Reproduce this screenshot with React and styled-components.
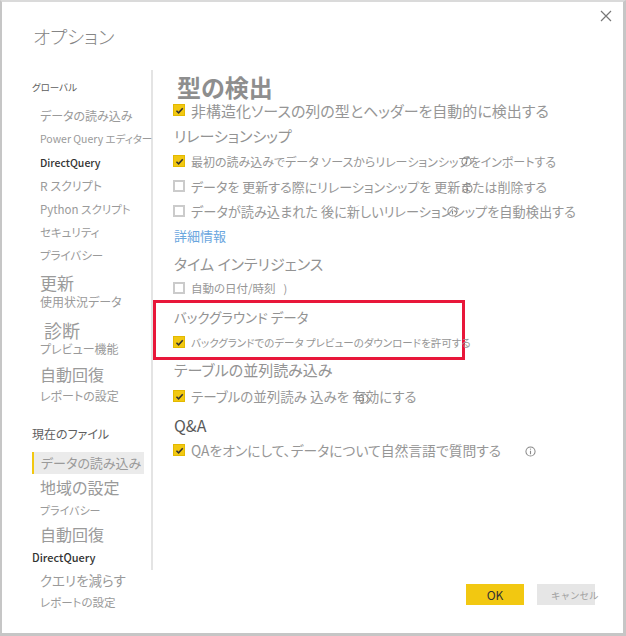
import React from 'react';
import styled, {createGlobalStyle} from 'styled-components';

const Global = createGlobalStyle`
  html, body {
    margin: 0;
    padding: 0;
    background: #fff;
  }
  body {
    font-family: "Noto Sans CJK JP", "Noto Sans", sans-serif;
    font-feature-settings: "palt" 1;
  }
`;

const Dialog = styled.div`
  box-sizing: border-box;
  width: 626px;
  height: 636px;
  display: flex;
  flex-direction: column;
  background: #fff;
  border-style: solid;
  border-color: #c6c6c6;
  border-width: 2px 3px 3px 2px;
  border-top-color: #dadada;
`;

const Header = styled.div`
  height: 68px;
  display: flex;
  justify-content: space-between;
  align-items: flex-start;
  padding-left: 31px;
  padding-right: 9px;
`;

const Title = styled.h1`
  margin: 22px 0 0;
  font-size: 18.5px;
  line-height: 24px;
  font-weight: 300;
  color: #858585;
`;

const Close = styled.button`
  margin-top: 6px;
  width: 16px;
  height: 16px;
  padding: 0;
  border: 0;
  background: none;
  display: flex;
  align-items: center;
  justify-content: center;
`;

const Body = styled.div`
  height: 500px;
  display: flex;
`;

const Nav = styled.nav`
  box-sizing: border-box;
  width: 151px;
  flex: none;
  border-right: 2px solid #e4e4e4;
  padding-left: 29px;
`;

const NavItem = styled.div`
  height: 18px;
  line-height: 18px;
  margin-top: ${p => p.$mt}px;
  padding-left: ${p => (p.$head ? 1 : 9)}px;
  font-size: ${p => p.$size}px;
  font-weight: ${p => (p.$strong ? 500 : 400)};
  color: ${p => (p.$strong ? '#333' : p.$head ? '#5e5e5e' : '#9a9a9a')};
  white-space: nowrap;
`;

const NavSelected = styled.div`
  box-sizing: border-box;
  width: 112px;
  height: 22px;
  line-height: 22px;
  margin: 9px 0 0 1px;
  padding-left: 7px;
  border-left: 2px solid #f2c811;
  background: #ebebeb;
  font-size: 13px;
  color: #9a9a9a;
  white-space: nowrap;
`;

const Content = styled.section`
  flex: 1;
  padding-left: 20px;
  color: #969696;
`;

const PageTitle = styled.h2`
  margin: 5px 0 0;
  height: 24px;
  line-height: 24px;
  padding-left: 4px;
  font-size: 24px;
  font-weight: 700;
  color: #8e8e8e;
`;

const Heading = styled.h3`
  margin: ${p => p.$mt}px 0 0;
  height: 20px;
  line-height: 20px;
  padding-left: 1px;
  font-size: ${p => p.$size}px;
  font-weight: 400;
  color: ${p => (p.$dark ? '#5a5a5a' : '#939393')};
  white-space: nowrap;
`;

const Row = styled.label`
  position: relative;
  display: flex;
  align-items: center;
  gap: 6px;
  height: 20px;
  margin-top: ${p => p.$mt}px;
  font-size: ${p => p.$size}px;
  white-space: nowrap;
`;

const Box = styled.span`
  box-sizing: border-box;
  flex: none;
  width: 12px;
  height: 12px;
  display: flex;
  align-items: center;
  justify-content: center;
  background: ${p => (p.$on ? '#f2c811' : '#fff')};
  border: ${p => (p.$on ? '1px solid #e3b900' : '2px solid #cbcbcb')};
`;

const Info = styled.span`
  position: absolute;
  left: ${p => p.$x}px;
  top: ${p => p.$y}px;
  width: 11px;
  height: 11px;
  display: flex;
`;

const Paren = styled.span`
  margin-left: 2px;
  font-size: 11px;
`;

const Link = styled.a`
  display: block;
  margin-top: 5px;
  height: 20px;
  line-height: 20px;
  padding-left: 1px;
  font-size: 13px;
  color: #6aa6de;
  text-decoration: none;
`;

const Highlight = styled.div`
  box-sizing: border-box;
  width: 312px;
  margin: 2px 0 0 -20px;
  padding: 4px 0 5px 17px;
  border: 3px solid #e8173a;
`;

const Footer = styled.div`
  flex: 1;
  display: flex;
  justify-content: flex-end;
  align-items: flex-start;
  gap: 13px;
  padding: 14px 28px 0 0;
`;

const Button = styled.button`
  width: 58px;
  height: 21px;
  border: 0;
  padding: 0 0 0 ${p => (p.$primary ? 0 : 14)}px;
  font-family: inherit;
  font-size: ${p => (p.$primary ? 12 : 9.5)}px;
  white-space: nowrap;
  background: ${p => (p.$primary ? '#f2c811' : '#e6e6e6')};
  color: ${p => (p.$primary ? '#333' : '#a0a0a0')};
`;

const Check = ({on}) => (
  <Box $on={on}>
    {on && (
      <svg width="9" height="9" viewBox="0 0 10 10">
        <path d="M1.6 5.2 L4 7.6 L8.6 2.4" fill="none" stroke="#333" strokeWidth="1.7" />
      </svg>
    )}
  </Box>
);

const InfoIcon = ({x, y}) => (
  <Info $x={x} $y={y}>
    <svg width="11" height="11" viewBox="0 0 12 12">
      <circle cx="6" cy="6" r="5" fill="none" stroke="#888" strokeWidth="1.1" />
      <path d="M6 5.2 V9" stroke="#888" strokeWidth="1.2" />
      <circle cx="6" cy="3.4" r="0.7" fill="#888" />
    </svg>
  </Info>
);

const Option = ({on, size, mt, info, children}) => (
  <Row $size={size} $mt={mt}>
    <Check on={on} />
    {children}
    {info && <InfoIcon x={info[0]} y={info[1]} />}
  </Row>
);

const App = () => (
  <>
    <Global />
    <Dialog>
      <Header>
        <Title>オプション</Title>
        <Close aria-label="閉じる">
          <svg width="12" height="12" viewBox="0 0 12 12">
            <path d="M1 1 L11 11 M11 1 L1 11" stroke="#777" strokeWidth="1.2" />
          </svg>
        </Close>
      </Header>
      <Body>
        <Nav>
          <NavItem $head $size={9.5} $mt={8}>グローバル</NavItem>
          <NavItem $size={12} $mt={11}>データの読み込み</NavItem>
          <NavItem $size={10.5} $mt={5}>Power Query エディター</NavItem>
          <NavItem $strong $size={10.5} $mt={6}>DirectQuery</NavItem>
          <NavItem $size={12} $mt={5}>R スクリプト</NavItem>
          <NavItem $size={11.5} $mt={5}>Python スクリプト</NavItem>
          <NavItem $size={11.5} $mt={5}>セキュリティ</NavItem>
          <NavItem $size={11.5} $mt={5}>プライバシー</NavItem>
          <NavItem $size={17} $mt={10}>更新</NavItem>
          <NavItem $size={12} $mt={1}>使用状況データ</NavItem>
          <NavItem $size={18} $mt={10}>&nbsp;診断</NavItem>
          <NavItem $size={12} $mt={1}>プレビュー機能</NavItem>
          <NavItem $size={16} $mt={7}>自動回復</NavItem>
          <NavItem $size={12} $mt={4}>レポートの設定</NavItem>
          <NavItem $head $size={12} $mt={20}>現在のファイル</NavItem>
          <NavSelected>データの読み込み</NavSelected>
          <NavItem $size={16} $mt={4}>地域の設定</NavItem>
          <NavItem $size={11} $mt={5}>プライバシー</NavItem>
          <NavItem $size={16} $mt={6}>自動回復</NavItem>
          <NavItem $head $strong $size={11} $mt={5}>DirectQuery</NavItem>
          <NavItem $size={13.5} $mt={5}>クエリを減らす</NavItem>
          <NavItem $size={11.5} $mt={4}>レポートの設定</NavItem>
        </Nav>
        <Content>
          <PageTitle>型の検出</PageTitle>
          <Option on size={15} mt={1}>非構造化ソースの列の型とヘッダーを自動的に検出する</Option>
          <Heading $size={15} $mt={6}>リレーションシップ</Heading>
          <Option on size={12} mt={5} info={[288, 5]}>
            最初の読み込みでデータ ソースからリレーションシップをインポートする
          </Option>
          <Option size={13} mt={5} info={[289, 7]}>
            データを 更新する際にリレーションシップを 更新または削除する
          </Option>
          <Option size={13.2} mt={5} info={[274, 5]}>
            データが読み込まれた 後に新しいリレーションシップを自動検出する
          </Option>
          <Link href="#">詳細情報</Link>
          <Heading $size={15} $mt={8}>タイム インテリジェンス</Heading>
          <Option size={11.5} mt={4}>
            自動の日付/時刻<Paren>)</Paren>
          </Option>
          <Highlight>
            <Heading $size={13.5} $mt={0}>バックグラウンド データ</Heading>
            <Option on size={10.5} mt={5}>
              バックグランドでのデータ プレビューのダウンロードを許可する
            </Option>
          </Highlight>
          <Heading $size={15} $mt={0}>テーブルの並列読み込み</Heading>
          <Option on size={13.5} mt={6} info={[185, 7]}>
            テーブルの並列読み 込みを 有効にする
          </Option>
          <Heading $dark $size={16} $mt={9}>Q&amp;A</Heading>
          <Option on size={13.8} mt={5} info={[352, 6]}>
            QAをオンにして、データについて自然言語で質問する
          </Option>
        </Content>
      </Body>
      <Footer>
        <Button $primary>OK</Button>
        <Button>キャンセル</Button>
      </Footer>
    </Dialog>
  </>
);

export default App;
